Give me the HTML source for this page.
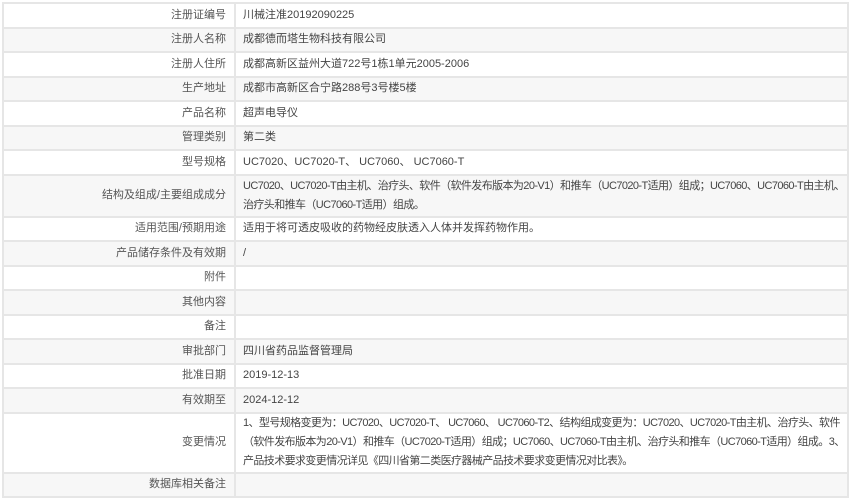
<!DOCTYPE html>
<html><head><meta charset="utf-8"><style>
html,body{margin:0;padding:0;background:#fff;width:850px;height:499px;overflow:hidden}
table{position:absolute;left:2px;top:2px;width:847px;border-collapse:collapse;table-layout:fixed;font-family:"Liberation Sans","Noto Sans CJK SC",sans-serif;font-size:11px;color:#444}
td{border:2px solid #e6e6e6;height:22.5px;padding:0 0 0 7px;line-height:19px;vertical-align:middle;overflow:hidden}
td.l{text-align:right;color:#555;padding:0 8px 0 0}
tr:nth-child(even) td{background:#f7f7f7}
tr.t1 td{height:40px}
tr.t2 td{height:58px}
td.n{letter-spacing:-0.6px;white-space:nowrap;padding-right:0}
</style></head><body>
<table>
<colgroup><col style="width:232px"><col></colgroup>
<tr><td class="l">注册证编号</td><td>川械注准20192090225</td></tr>
<tr><td class="l">注册人名称</td><td>成都德而塔生物科技有限公司</td></tr>
<tr><td class="l">注册人住所</td><td>成都高新区益州大道722号1栋1单元2005-2006</td></tr>
<tr><td class="l">生产地址</td><td>成都市高新区合宁路288号3号楼5楼</td></tr>
<tr><td class="l">产品名称</td><td>超声电导仪</td></tr>
<tr><td class="l">管理类别</td><td>第二类</td></tr>
<tr><td class="l">型号规格</td><td>UC7020、UC7020-T、 UC7060、 UC7060-T</td></tr>
<tr class="t1"><td class="l">结构及组成/主要组成成分</td><td class="n">UC7020、UC7020-T由主机、治疗头、软件（软件发布版本为20-V1）和推车（UC7020-T适用）组成；UC7060、UC7060-T由主机、<br>治疗头和推车（UC7060-T适用）组成。</td></tr>
<tr><td class="l">适用范围/预期用途</td><td>适用于将可透皮吸收的药物经皮肤透入人体并发挥药物作用。</td></tr>
<tr><td class="l">产品储存条件及有效期</td><td>/</td></tr>
<tr><td class="l">附件</td><td></td></tr>
<tr><td class="l">其他内容</td><td></td></tr>
<tr><td class="l">备注</td><td></td></tr>
<tr><td class="l">审批部门</td><td>四川省药品监督管理局</td></tr>
<tr><td class="l">批准日期</td><td>2019-12-13</td></tr>
<tr><td class="l">有效期至</td><td>2024-12-12</td></tr>
<tr class="t2"><td class="l">变更情况</td><td class="n">1、型号规格变更为：UC7020、UC7020-T、 UC7060、 UC7060-T2、结构组成变更为：UC7020、UC7020-T由主机、治疗头、软件<br>（软件发布版本为20-V1）和推车（UC7020-T适用）组成；UC7060、UC7060-T由主机、治疗头和推车（UC7060-T适用）组成。3、<br>产品技术要求变更情况详见《四川省第二类医疗器械产品技术要求变更情况对比表》。</td></tr>
<tr><td class="l">数据库相关备注</td><td></td></tr>
</table>
</body></html>
